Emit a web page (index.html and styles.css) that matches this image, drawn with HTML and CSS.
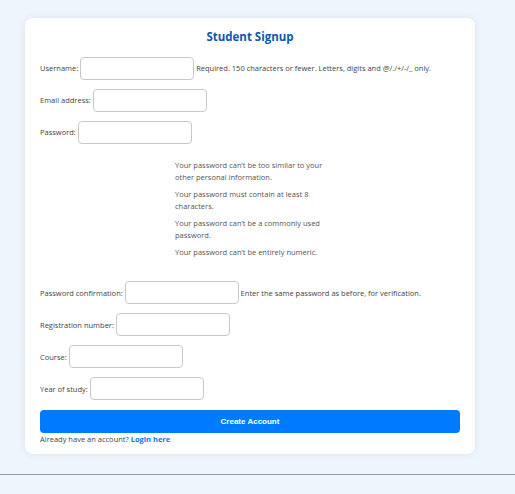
FILE: index.html
```html
<!DOCTYPE html>
<html lang="en">
<head>
<meta charset="utf-8">
<title>Student Signup</title>
<link rel="stylesheet" href="styles.css">
</head>
<body>
<div class="page">
  <div class="card">
    <h2 class="title">Student Signup</h2>
    <form class="form">
      <div class="row"><label>Username:</label> <input type="text"> <span class="help">Required. 150 characters or fewer. Letters, digits and @/./+/-/_ only.</span></div>
      <div class="row"><label>Email address:</label> <input type="email"></div>
      <div class="row"><label>Password:</label> <input type="password"></div>
      <ul class="pw-help">
        <li>Your password can’t be too similar to your other personal information.</li>
        <li>Your password must contain at least 8 characters.</li>
        <li>Your password can’t be a commonly used password.</li>
        <li>Your password can’t be entirely numeric.</li>
      </ul>
      <div class="row"><label>Password confirmation:</label> <input type="password"> <span class="help">Enter the same password as before, for verification.</span></div>
      <div class="row"><label>Registration number:</label> <input type="text"></div>
      <div class="row"><label>Course:</label> <input type="text"></div>
      <div class="row"><label>Year of study:</label> <input type="text"></div>
      <button type="button" class="btn">Create Account</button>
    </form>
    <p class="login">Already have an account? <a href="#" class="link">Login here</a></p>
  </div>
  <hr class="rule">
</div>
</body>
</html>
```
FILE: styles.css
```css
html, body {
  margin: 0;
  padding: 0;
}
body {
  background: #eef5fd;
  font-family: "Open Sans", "Noto Sans", sans-serif;
  font-size: 7.5px;
  color: #444;
}
.page {
  padding-top: 18px;
}
.card {
  margin-left: 25px;
  width: 450px;
  box-sizing: border-box;
  background: #fff;
  border-radius: 8px;
  box-shadow: 0 0 8px rgba(0, 0, 0, 0.08);
  padding: 10px 15px 10px;
}
.title {
  margin: 0 0 10px;
  text-align: center;
  font-size: 11.5px;
  line-height: 18px;
  font-weight: 700;
  color: #0d57b0;
}
.form {
  margin: 0;
}
.row {
  height: 23px;
  line-height: 23px;
  margin-bottom: 9px;
  white-space: nowrap;
}
.row label, .row input, .row .help {
  vertical-align: middle;
}
.row input {
  width: 114px;
  height: 23px;
  box-sizing: border-box;
  border: 1px solid #c8c8c8;
  border-radius: 4px;
  padding: 2px 5px;
  margin: 0;
  font: inherit;
}
.pw-help {
  list-style: none;
  margin: 17px 0 22px 135px;
  padding: 0;
  width: 160px;
  line-height: 11.5px;
  color: #555;
}
.pw-help li {
  margin-bottom: 6px;
}
.pw-help li:last-child {
  margin-bottom: 0;
}
.btn {
  display: block;
  width: 100%;
  height: 23px;
  margin-top: 10px;
  border: 0;
  border-radius: 4px;
  background: #007bff;
  color: #fff;
  font-family: "Liberation Sans", Arial, sans-serif;
  font-weight: 700;
  font-size: 8px;
}
.login {
  margin: 1px 0 0;
  line-height: 10px;
}
.link {
  color: #007bff;
  font-weight: 700;
  text-decoration: none;
}
.rule {
  margin: 20px 0 0;
  border: 0;
  border-top: 1px solid #999;
}
```
